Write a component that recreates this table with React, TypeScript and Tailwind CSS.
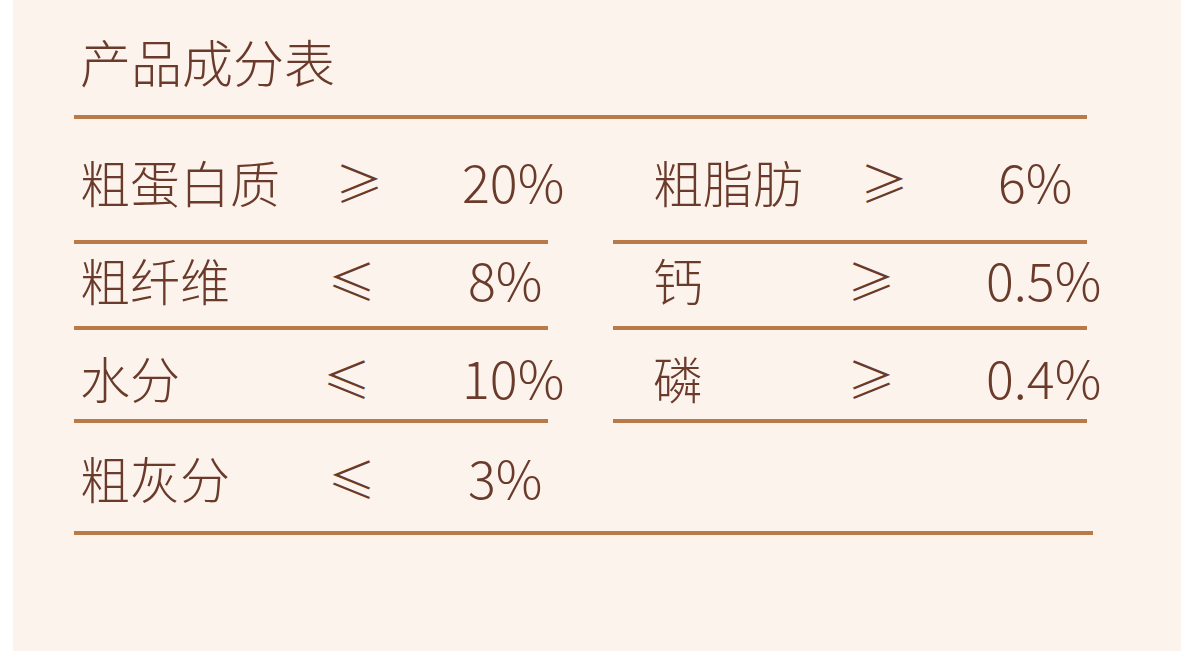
import React from 'react';

interface Item {
  label: string;
  sym: string;
  value: string;
  labelW: string;
  symW: string;
}

interface Row {
  left: Item;
  right?: Item;
  rowClass: string;
}

const rows: Row[] = [
  {
    rowClass: 'h-[125px] pt-[38px]',
    left: { label: '粗蛋白质', sym: '≥', value: '20%', labelW: 'w-[255px]', symW: 'w-[127px]' },
    right: { label: '粗脂肪', sym: '≥', value: '6%', labelW: 'w-[207px]', symW: 'w-[138px]' },
  },
  {
    rowClass: 'h-[86px] pt-[11px]',
    left: { label: '粗纤维', sym: '≤', value: '8%', labelW: 'w-[248px]', symW: 'w-[140px]' },
    right: { label: '钙', sym: '≥', value: '0.5%', labelW: 'w-[194px]', symW: 'w-[139px]' },
  },
  {
    rowClass: 'h-[93px] pt-[23px]',
    left: { label: '水分', sym: '≤', value: '10%', labelW: 'w-[243px]', symW: 'w-[139px]' },
    right: { label: '磷', sym: '≥', value: '0.4%', labelW: 'w-[194px]', symW: 'w-[139px]' },
  },
];

const Cell: React.FC<{ item: Item; pad: string }> = ({ item, pad }) => (
  <div className={`flex items-center ${pad}`}>
    <span className={`${item.labelW} shrink-0 text-[50px]`}>{item.label}</span>
    <span className={`${item.symW} shrink-0 text-[48px]`}>{item.sym}</span>
    <span className="text-[52px]">{item.value}</span>
  </div>
);

export default function App() {
  return (
    <div className="min-h-screen bg-white pl-[13px] pr-[19px]">
      <div className="h-[651px] bg-[#fcf3ec] pl-[61px] pt-[36px] font-['Noto_Sans_CJK_SC','Noto_Sans',sans-serif] font-light text-[#6a3a2b]">
        <div className="pl-[6px] text-[51px] leading-[50px]">产品成分表</div>
        <div className="mt-[29px] h-[4px] w-[1013px] bg-[#b97a48]" />

        {rows.map((row, i) => (
          <div key={i} className="grid grid-cols-[474px_474px] gap-x-[65px] leading-[48px]">
            <div className={`${row.rowClass} border-b-4 border-[#b97a48]`}>
              <Cell item={row.left} pad="pl-[6px]" />
            </div>
            <div className={`${row.rowClass} border-b-4 border-[#b97a48]`}>
              {row.right && <Cell item={row.right} pad="pl-[40px]" />}
            </div>
          </div>
        ))}

        <div className="h-[112px] w-[1019px] border-b-4 border-[#b97a48] pt-[30px] leading-[48px]">
          <Cell
            item={{ label: '粗灰分', sym: '≤', value: '3%', labelW: 'w-[248px]', symW: 'w-[140px]' }}
            pad="pl-[6px]"
          />
        </div>
      </div>
    </div>
  );
}
